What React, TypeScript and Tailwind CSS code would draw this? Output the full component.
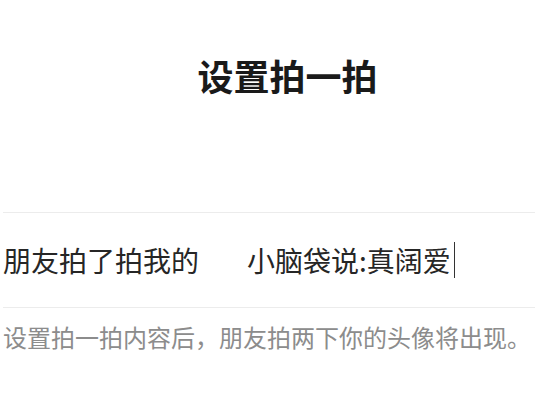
export default function App() {
  return (
    <div
      className="w-[535px] h-[419px] overflow-hidden bg-white"
      style={{ fontFamily: '"Noto Sans CJK SC", "Noto Sans", sans-serif' }}
    >
      {/* Title */}
      <div className="flex justify-center pl-[40px] pt-[57px]">
        <h1 className="text-[36px] leading-none font-bold text-[#1a1a1a]">设置拍一拍</h1>
      </div>

      {/* Input row */}
      <div className="mt-[119px] ml-[3px] border-t border-b border-[#ececec]">
        <div className="flex h-[94px] items-center text-[28px] leading-none text-[#262626]">
          <span className="w-[244px] shrink-0">朋友拍了拍我的</span>
          <span>小脑袋说:真阔爱</span>
          <span className="ml-[3px] h-[36px] w-[1.5px] bg-[#333]" />
        </div>
      </div>

      {/* Hint */}
      <p className="pl-[3px] pt-[17px] text-[24px] leading-none text-[#8c8c8c]">
        设置拍一拍内容后，朋友拍两下你的头像将出现。
      </p>
    </div>
  );
}
